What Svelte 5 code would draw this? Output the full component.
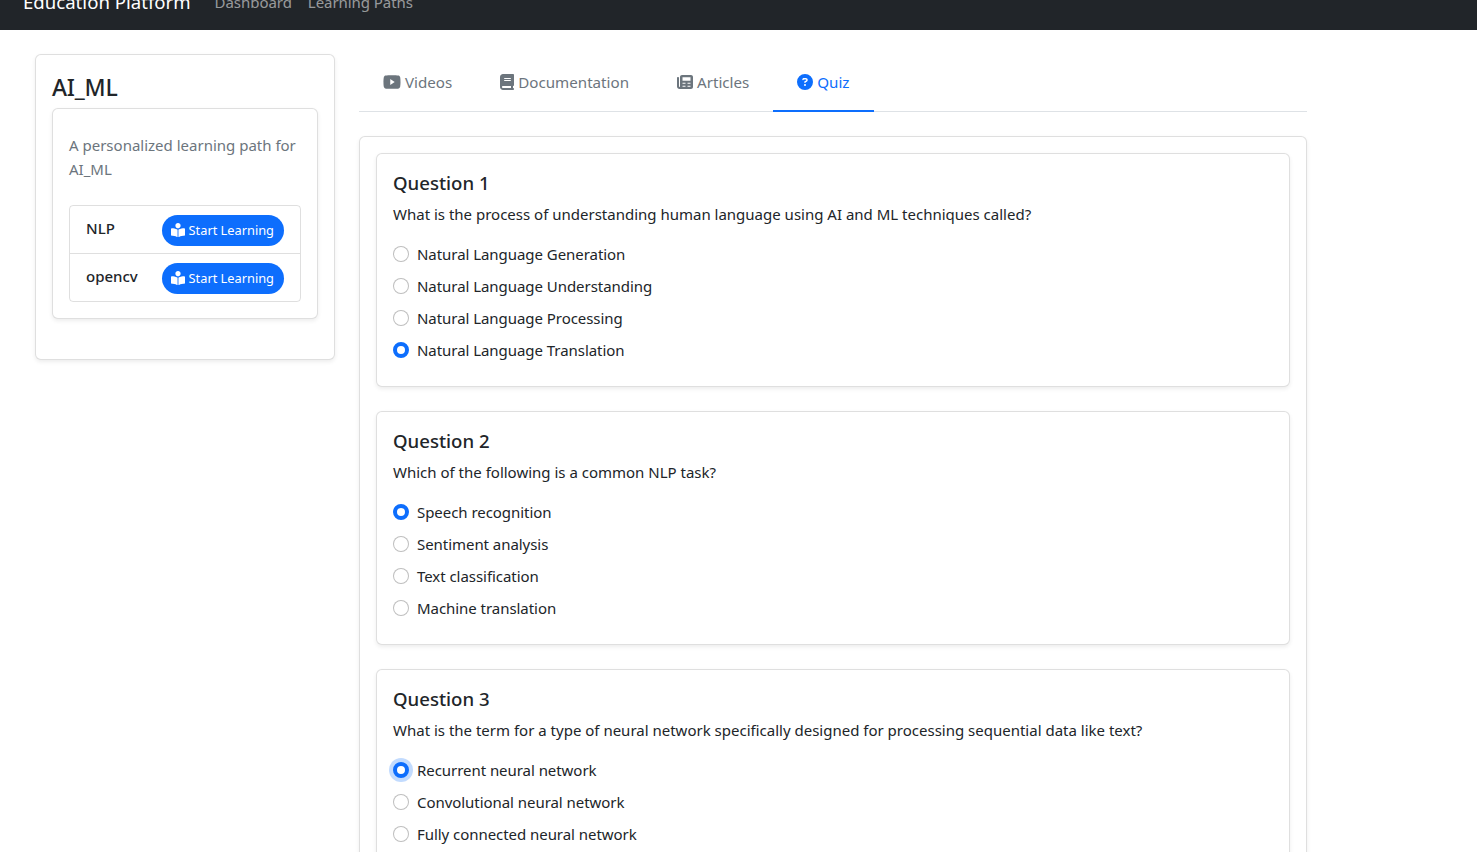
<script lang="ts">
	type Question = { title: string; text: string; options: string[]; selected: number; focused?: boolean };

	const questions: Question[] = [
		{
			title: 'Question 1',
			text: 'What is the process of understanding human language using AI and ML techniques called?',
			options: [
				'Natural Language Generation',
				'Natural Language Understanding',
				'Natural Language Processing',
				'Natural Language Translation'
			],
			selected: 3
		},
		{
			title: 'Question 2',
			text: 'Which of the following is a common NLP task?',
			options: ['Speech recognition', 'Sentiment analysis', 'Text classification', 'Machine translation'],
			selected: 0
		},
		{
			title: 'Question 3',
			text: 'What is the term for a type of neural network specifically designed for processing sequential data like text?',
			options: [
				'Recurrent neural network',
				'Convolutional neural network',
				'Fully connected neural network',
				'Generative adversarial network'
			],
			selected: 0,
			focused: true
		}
	];

	const topics = ['NLP', 'opencv'];
</script>

<div class="page">
	<nav class="navbar">
		<span class="brand">Education Platform</span>
		<a class="nav-link" href="#dashboard">Dashboard</a>
		<a class="nav-link" href="#paths">Learning Paths</a>
	</nav>

	<main class="content">
		<aside class="card side">
			<h3>AI_ML</h3>
			<div class="card path">
				<p class="muted">A personalized learning path for AI_ML</p>
				<ul class="topics">
					{#each topics as topic}
						<li>
							<span class="topic-name">{topic}</span>
							<button class="start">
								<svg class="icon" viewBox="0 0 512 512" width="14" height="14" fill="currentColor">
									<path d="M352 96c0-53.02-42.98-96-96-96s-96 42.98-96 96 42.98 96 96 96 96-42.98 96-96zM233.59 241.1c-59.33-36.32-155.43-46.3-203.79-49.05C13.55 191.13 0 203.51 0 219.14v222.8c0 14.33 11.59 26.28 26.49 27.05 43.66 2.29 131.99 10.68 193.04 41.43 9.37 4.72 20.48-1.71 20.48-11.87V252.56c-.01-4.67-2.32-8.95-6.42-11.46zm248.61-49.05c-48.35 2.74-144.46 12.73-203.78 49.05-4.1 2.51-6.41 6.96-6.41 11.63v245.79c0 10.19 11.14 16.63 20.54 11.9 61.04-30.72 149.32-39.11 192.97-41.4 14.9-.78 26.49-12.73 26.49-27.06V219.14c-.01-15.63-13.56-28.01-29.81-27.09z" />
								</svg>
								Start Learning
							</button>
						</li>
					{/each}
				</ul>
			</div>
		</aside>

		<section class="main">
			<div class="tabs">
				<a class="tab" href="#videos">
					<svg class="icon" viewBox="0 32 576 448" width="18" height="16" preserveAspectRatio="none" fill="currentColor">
						<path d="M549.7 124.1c-6.3-23.7-24.8-42.3-48.3-48.6C458.8 64 288 64 288 64S117.2 64 74.6 75.5c-23.5 6.3-42 24.9-48.3 48.6-11.4 42.9-11.4 132.3-11.4 132.3s0 89.4 11.4 132.3c6.3 23.7 24.8 41.5 48.3 47.8C117.2 448 288 448 288 448s170.8 0 213.4-11.5c23.5-6.3 42-24.2 48.3-47.8 11.4-42.9 11.4-132.3 11.4-132.3s0-89.4-11.4-132.3zm-317.5 213.5V175.2l142.7 81.2-142.7 81.2z" />
					</svg>
					Videos
				</a>
				<a class="tab" href="#docs">
					<svg class="icon" viewBox="0 0 448 512" width="14" height="16" fill="currentColor">
						<path d="M96 0C43 0 0 43 0 96V416c0 53 43 96 96 96H384h32c17.7 0 32-14.3 32-32s-14.3-32-32-32V384c17.7 0 32-14.3 32-32V32c0-17.7-14.3-32-32-32H384 96zm0 384H352v64H96c-17.7 0-32-14.3-32-32s14.3-32 32-32zm32-240c0-8.8 7.2-16 16-16H336c8.8 0 16 7.2 16 16s-7.2 16-16 16H144c-8.8 0-16-7.2-16-16zm16 48H336c8.8 0 16 7.2 16 16s-7.2 16-16 16H144c-8.8 0-16-7.2-16-16s7.2-16 16-16z" />
					</svg>
					Documentation
				</a>
				<a class="tab" href="#articles">
					<svg class="icon" viewBox="0 0 512 512" width="16" height="16" fill="currentColor" fill-rule="evenodd">
						<path d="M96 96c0-35.3 28.7-64 64-64H448c35.3 0 64 28.7 64 64V416c0 35.3-28.7 64-64 64H80c-44.2 0-80-35.8-80-80V128c0-17.7 14.3-32 32-32s32 14.3 32 32V400c0 8.8 7.2 16 16 16s16-7.2 16-16V96zM176 104h256v112H176zM176 280h96v32h-96zM336 280h96v32h-96zM176 376h96v32h-96zM336 376h96v32h-96z" />
					</svg>
					Articles
				</a>
				<a class="tab active" href="#quiz">
					<svg class="icon" viewBox="0 0 512 512" width="16" height="16" fill="currentColor">
						<path d="M256 512A256 256 0 1 0 256 0a256 256 0 1 0 0 512zM169.8 165.3c7.9-22.3 29.1-37.3 52.8-37.3h58.3c34.9 0 63.1 28.3 63.1 63.1c0 22.6-12.1 43.5-31.7 54.8L280 264.4c-.2 13-10.9 23.6-24 23.6c-13.3 0-24-10.7-24-24V250.5c0-8.6 4.6-16.5 12.1-20.8l44.3-25.4c4.7-2.7 7.6-7.7 7.6-13.1c0-8.4-6.8-15.1-15.1-15.1H222.6c-3.4 0-6.4 2.1-7.5 5.3l-.4 1.2c-4.4 12.5-18.2 19-30.6 14.6s-19-18.2-14.6-30.6l.4-1.2zM224 352a32 32 0 1 1 64 0 32 32 0 1 1 -64 0z" />
					</svg>
					Quiz
				</a>
			</div>

			<div class="card quiz">
				{#each questions as q, i}
					<div class="card question">
						<h5>{q.title}</h5>
						<p class="question-text">{q.text}</p>
						{#each q.options as option, j}
							<label class="option">
								<input type="radio" name={'q' + i} checked={j === q.selected} class:focused={q.focused && j === q.selected} />
								{option}
							</label>
						{/each}
					</div>
				{/each}
			</div>
		</section>
	</main>
</div>

<style>
	:global(body) {
		overflow: hidden;
		height: 852px;
		background: #fff;
	}

	.page {
		margin-top: -26px;
		font-family: 'Noto Sans', 'Open Sans', sans-serif;
		font-size: 15px;
		line-height: 24px;
		color: #212529;
	}

	.navbar {
		display: flex;
		align-items: center;
		height: 56px;
		padding: 0 23px;
		box-sizing: border-box;
		background: #212529;
	}

	.brand {
		font-size: 18.6px;
		color: #fff;
		margin-right: 24px;
	}

	.nav-link {
		color: rgba(255, 255, 255, 0.55);
		text-decoration: none;
		margin-right: 16px;
		letter-spacing: -0.05px;
	}

	.content {
		display: flex;
		align-items: flex-start;
		gap: 24px;
		padding: 24px 0 0 35px;
	}

	.card {
		box-sizing: border-box;
		background: #fff;
		border: 1px solid rgba(0, 0, 0, 0.125);
		border-radius: 6px;
		box-shadow: 0 2px 4px rgba(0, 0, 0, 0.075);
	}

	.side {
		flex: 0 0 300px;
		padding: 16px;
	}

	h3 {
		margin: 0 0 6px;
		padding-top: 2px;
		font-size: 23px;
		line-height: 29px;
		font-weight: 500;
		letter-spacing: -0.2px;
	}

	.path {
		padding: 16px;
		margin-bottom: 24px;
	}

	.muted {
		margin: 8px 0 24px;
		color: #6c757d;
	}

	.topics {
		list-style: none;
		margin: 0;
		padding: 0;
		border: 1px solid rgba(0, 0, 0, 0.125);
		border-radius: 4px;
	}

	.topics li {
		display: flex;
		align-items: center;
		justify-content: space-between;
		height: 47px;
		box-sizing: border-box;
		padding: 0 16px;
	}

	.topics li + li {
		height: 48px;
		border-top: 1px solid rgba(0, 0, 0, 0.125);
	}

	.topic-name {
		font-weight: 500;
		padding-bottom: 4px;
	}

	.start {
		display: flex;
		align-items: center;
		gap: 4px;
		height: 31px;
		padding: 0 10px 0 9px;
		margin-top: 1px;
		border: none;
		border-radius: 16px;
		background: #0d6efd;
		color: #fff;
		font: inherit;
		font-size: 12.8px;
	}

	.icon {
		flex: none;
	}

	.main {
		flex: 0 0 948px;
	}

	.tabs {
		display: flex;
		height: 58px;
		margin-bottom: 24px;
		box-sizing: border-box;
		border-bottom: 1px solid #dee2e6;
	}

	.tab {
		display: flex;
		align-items: center;
		gap: 4px;
		height: 58px;
		box-sizing: border-box;
		padding: 0 24px;
		border-bottom: 2px solid transparent;
		color: #6c757d;
		font-size: 15.15px;
		text-decoration: none;
	}

	.tab.active {
		color: #0d6efd;
		border-bottom-color: #0d6efd;
	}

	.quiz {
		padding: 16px;
	}

	.question {
		padding: 16px;
		margin-bottom: 24px;
	}

	h5 {
		margin: 0 0 7px;
		padding-top: 1px;
		font-size: 18.6px;
		line-height: 24px;
		font-weight: 500;
	}

	.question-text {
		margin: 0 0 16px;
	}

	.option {
		display: flex;
		align-items: center;
		gap: 8px;
		margin-bottom: 8px;
		letter-spacing: -0.05px;
	}

	input[type='radio'] {
		appearance: none;
		flex: none;
		width: 16px;
		height: 16px;
		margin: 0;
		border: 1px solid rgba(0, 0, 0, 0.25);
		border-radius: 50%;
		background: #fff;
	}

	input[type='radio']:checked {
		border: 4px solid #0d6efd;
	}

	input[type='radio'].focused {
		box-shadow: 0 0 0 4px rgba(13, 110, 253, 0.25);
	}
</style>
